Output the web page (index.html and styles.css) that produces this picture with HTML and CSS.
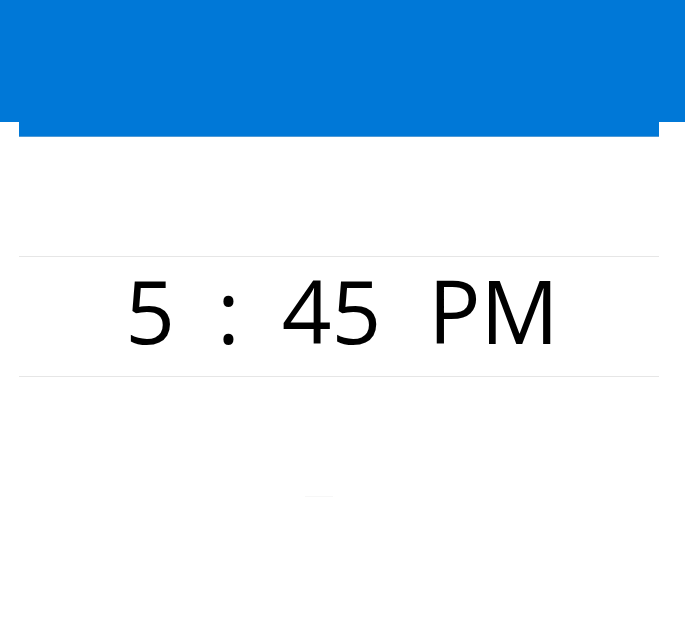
FILE: index.html
```html
<!DOCTYPE html>
<html>
<head>
<meta charset="utf-8">
<link rel="stylesheet" href="styles.css">
</head>
<body>
<div class="header"></div>
<div class="strip"></div>
<div class="picker">
  <div class="row">
    <span class="seg hour">5</span>
    <span class="seg colon">:</span>
    <span class="seg minute">45</span>
    <span class="seg ampm">PM</span>
  </div>
</div>
<div class="faint one"></div>
</body>
</html>
```
FILE: styles.css
```css
html, body {
  margin: 0;
  padding: 0;
  background: #ffffff;
}
body {
  width: 685px;
  height: 617px;
  overflow: hidden;
  font-family: "Open Sans", "Noto Sans", sans-serif;
}
.header {
  height: 122px;
  background: #0078d7;
}
.strip {
  margin: 0 26px 0 19px;
  height: 14px;
  background: #0078d7;
  border-bottom: 1px solid #4f9ad6;
}
.picker {
  margin: 119px 26px 0 19px;
  border-top: 1px solid #e6e6e6;
  border-bottom: 1px solid #e6e6e6;
  height: 119px;
}
.row {
  display: flex;
  justify-content: center;
  align-items: center;
  box-sizing: border-box;
  height: 119px;
  padding-bottom: 12px;
  padding-left: 6px;
  font-size: 87px;
  line-height: 1;
  color: #000;
}
.seg { display: block; }
.hour { margin-right: 42px; }
.colon { margin-right: 42px; }
.minute { margin-right: 47px; }
.faint {
  margin: 119px auto 0 305px;
  width: 28px;
  height: 1px;
  background: #f7f7f7;
}
```
